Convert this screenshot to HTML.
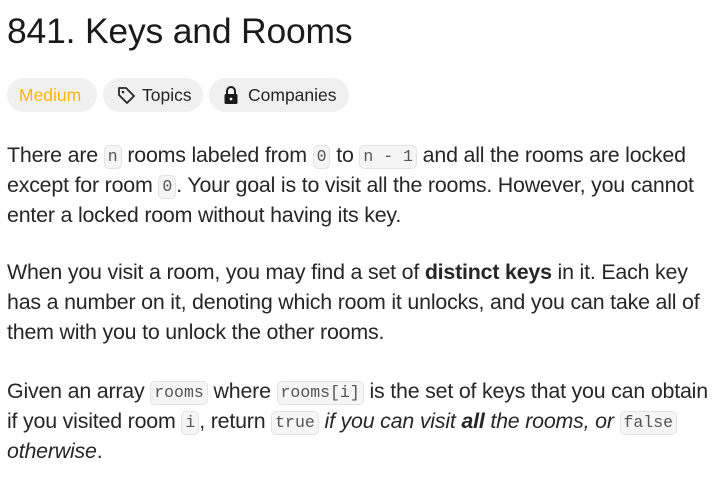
<!DOCTYPE html>
<html><head><meta charset="utf-8"><style>
body{margin:0;background:#fff;width:722px;height:485px;overflow:hidden;font-family:"Liberation Sans",sans-serif;color:#262626}
h1{position:absolute;left:7px;top:11px;margin:0;font-size:35.5px;font-weight:500;color:#1a1a1a;letter-spacing:-0.2px}
.pill{position:absolute;top:78px;height:34px;border-radius:17px;background:#f0f0f0;font-size:17.5px;line-height:34px;color:#262626;white-space:nowrap;box-sizing:border-box;padding-left:12px}
.p{position:absolute;left:7px;font-size:21.4px;line-height:30px;white-space:nowrap;letter-spacing:-0.2px}
code{font-family:"Liberation Mono",monospace;font-size:16.5px;line-height:20px;display:inline-block;background:#f5f5f5;border:1px solid #e3e3e3;border-radius:5px;padding:1px 3px;color:#555;vertical-align:1px;letter-spacing:0}
</style></head><body>
<h1>841. Keys and Rooms</h1>
<div class="pill" style="left:7px;width:90px;color:#ffb800">Medium</div>
<div class="pill" style="left:103px;width:100px;padding-left:13px"><svg width="20" height="20" viewBox="0 0 20 20" style="vertical-align:-4px;margin-right:6px"><path d="M3 3h7l8 8-7 7-8-8z" fill="none" stroke="#262626" stroke-width="1.8" stroke-linejoin="round"/><circle cx="7" cy="7" r="1.3" fill="#262626"/></svg>Topics</div>
<div class="pill" style="left:209px;width:140px;padding-left:13px"><svg width="18" height="20" viewBox="0 0 18 20" style="vertical-align:-4px;margin-right:8px"><path d="M5 9V6a4 4 0 0 1 8 0v3" fill="none" stroke="#1a1a1a" stroke-width="2"/><rect x="2.5" y="9" width="13" height="10" rx="1.5" fill="#1a1a1a"/><circle cx="9" cy="14" r="1.4" fill="#f0f0f0"/></svg>Companies</div>
<div class="p" style="top:140px">There are <code>n</code> rooms labeled from <code>0</code> to <code>n - 1</code> and all the rooms are locked<br>except for room <code>0</code>. Your goal is to visit all the rooms. However, you cannot<br>enter a locked room without having its key.</div>
<div class="p" style="top:257px">When you visit a room, you may find a set of <b>distinct keys</b> in it. Each key<br>has a number on it, denoting which room it unlocks, and you can take all of<br>them with you to unlock the other rooms.</div>
<div class="p" style="top:376px">Given an array <code>rooms</code> where <code>rooms[i]</code> is the set of keys that you can obtain<br>if you visited room <code>i</code>, return <code>true</code> <i>if you can visit <b>all</b> the rooms, or</i> <code>false</code><br><i>otherwise</i>.</div>
</body></html>
